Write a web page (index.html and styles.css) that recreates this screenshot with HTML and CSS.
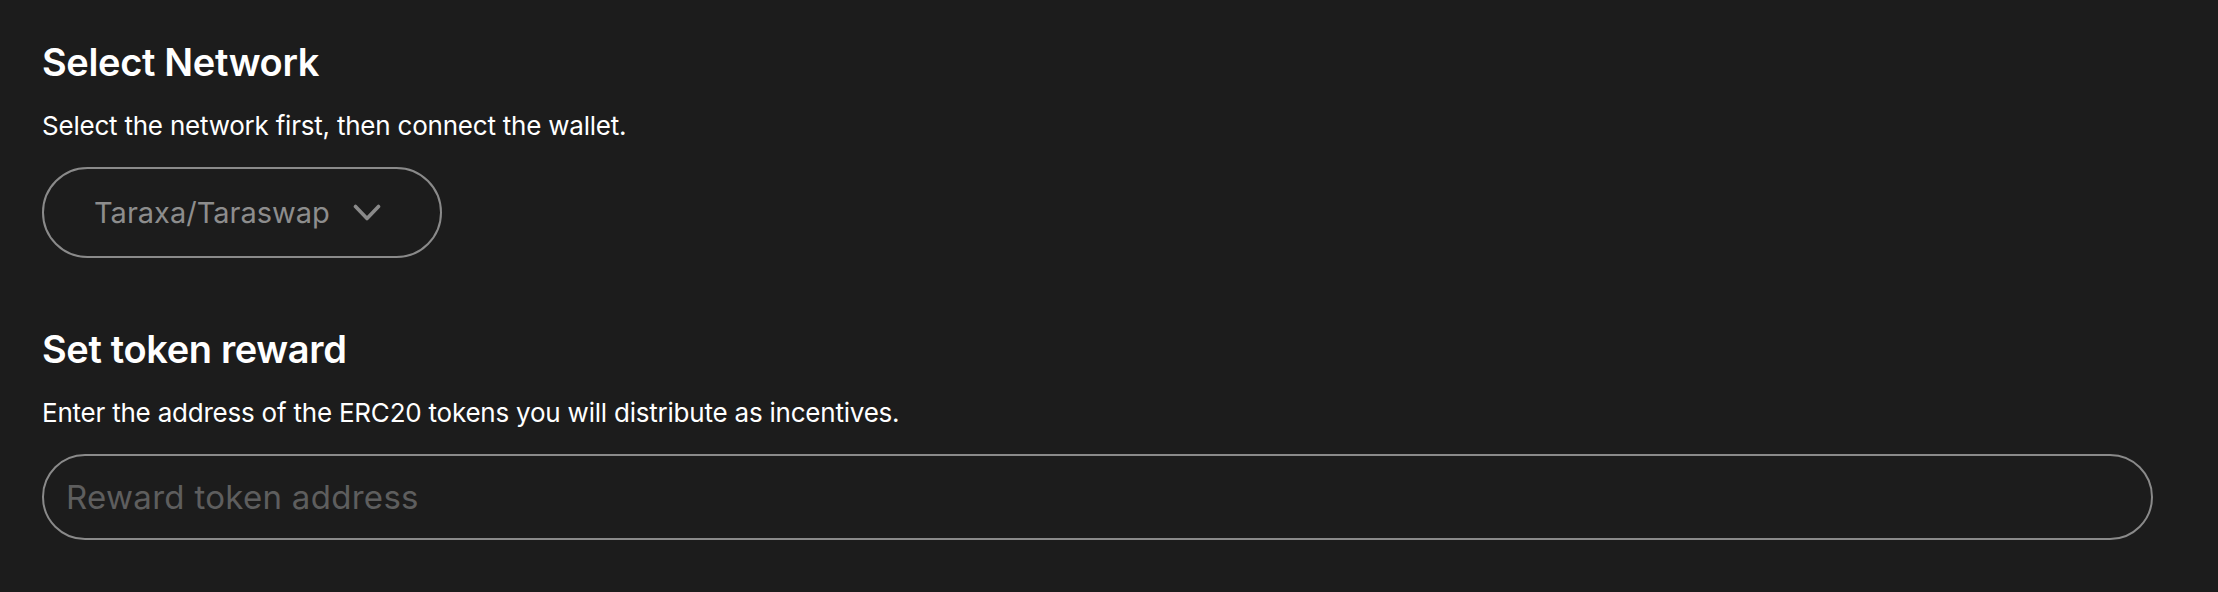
FILE: index.html
```html
<!DOCTYPE html>
<html lang="en">
<head>
<meta charset="utf-8">
<title>Incentive setup</title>
<link rel="stylesheet" href="styles.css">
</head>
<body>
<main class="page">
  <section class="field">
    <h2 class="field-title">Select Network</h2>
    <p class="field-desc">Select the network first, then connect the wallet.</p>
    <div class="field-control">
      <button class="select" type="button">
        <span class="select-label">Taraxa/Taraswap</span>
        <svg class="select-chevron" width="28" height="18" viewBox="0 0 28 18" aria-hidden="true">
          <polyline points="2.5,2.5 14,14.5 25.5,2.5" fill="none" stroke="currentColor" stroke-width="3.6" stroke-linecap="round" stroke-linejoin="round"/>
        </svg>
      </button>
    </div>
  </section>
  <section class="field">
    <h2 class="field-title">Set token reward</h2>
    <p class="field-desc">Enter the address of the ERC20 tokens you will distribute as incentives.</p>
    <input class="text-input" type="text" placeholder="Reward token address">
  </section>
</main>
</body>
</html>
```

FILE: styles.css
```css
html, body {
  margin: 0;
  padding: 0;
  background: #1c1c1c;
}

body {
  font-family: Inter, "Liberation Sans", sans-serif;
  color: #ffffff;
}

.page {
  display: flex;
  flex-direction: column;
  gap: 68px;
  padding: 39px 65px 0 42px;
}

.field {
  display: flex;
  flex-direction: column;
  gap: 25px;
}

.field-title {
  margin: 0;
  font-size: 38px;
  line-height: 46px;
  font-weight: 600;
  letter-spacing: -0.35px;
  color: #ffffff;
}

.field-desc {
  margin: 0;
  font-size: 26px;
  line-height: 32px;
  font-weight: 400;
  letter-spacing: -0.22px;
  color: #ffffff;
}

.field-control {
  display: flex;
}

.select {
  display: flex;
  align-items: center;
  gap: 23px;
  box-sizing: border-box;
  width: 400px;
  height: 91px;
  padding: 0 0 0 50px;
  border: 2px solid #8a8a8a;
  border-radius: 46px;
  background: transparent;
  color: #8d8d8d;
  font-family: inherit;
  font-size: 29px;
  cursor: pointer;
}

.select-label {
  line-height: 1;
}

.select-chevron {
  color: #8a8a8a;
  flex: none;
}

.text-input {
  box-sizing: border-box;
  width: 100%;
  height: 86px;
  padding: 0 22px;
  border: 2px solid #8a8a8a;
  border-radius: 43px;
  background: transparent;
  color: #ffffff;
  font-family: inherit;
  font-size: 33px;
  letter-spacing: 0.3px;
  outline: none;
}

.text-input::placeholder {
  color: #5e5e5e;
}
```
